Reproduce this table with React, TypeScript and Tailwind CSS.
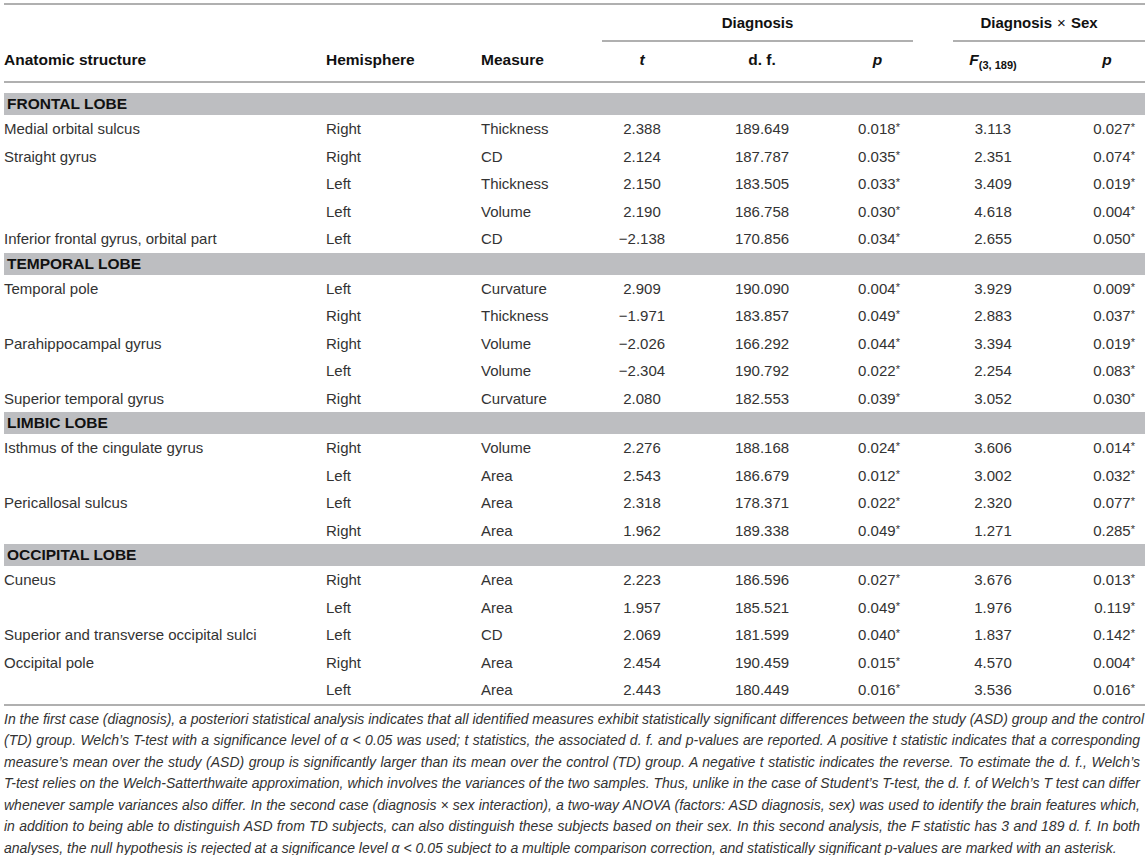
import React from "react";

type Row = [string, string, string, string, string, string, string, string];
type Section = { title: string; rows: Row[] };

const sections: Section[] = [
  {
    title: "FRONTAL LOBE",
    rows: [
      ["Medial orbital sulcus", "Right", "Thickness", "2.388", "189.649", "0.018", "3.113", "0.027"],
      ["Straight gyrus", "Right", "CD", "2.124", "187.787", "0.035", "2.351", "0.074"],
      ["", "Left", "Thickness", "2.150", "183.505", "0.033", "3.409", "0.019"],
      ["", "Left", "Volume", "2.190", "186.758", "0.030", "4.618", "0.004"],
      ["Inferior frontal gyrus, orbital part", "Left", "CD", "\u22122.138", "170.856", "0.034", "2.655", "0.050"],
    ],
  },
  {
    title: "TEMPORAL LOBE",
    rows: [
      ["Temporal pole", "Left", "Curvature", "2.909", "190.090", "0.004", "3.929", "0.009"],
      ["", "Right", "Thickness", "\u22121.971", "183.857", "0.049", "2.883", "0.037"],
      ["Parahippocampal gyrus", "Right", "Volume", "\u22122.026", "166.292", "0.044", "3.394", "0.019"],
      ["", "Left", "Volume", "\u22122.304", "190.792", "0.022", "2.254", "0.083"],
      ["Superior temporal gyrus", "Right", "Curvature", "2.080", "182.553", "0.039", "3.052", "0.030"],
    ],
  },
  {
    title: "LIMBIC LOBE",
    rows: [
      ["Isthmus of the cingulate gyrus", "Right", "Volume", "2.276", "188.168", "0.024", "3.606", "0.014"],
      ["", "Left", "Area", "2.543", "186.679", "0.012", "3.002", "0.032"],
      ["Pericallosal sulcus", "Left", "Area", "2.318", "178.371", "0.022", "2.320", "0.077"],
      ["", "Right", "Area", "1.962", "189.338", "0.049", "1.271", "0.285"],
    ],
  },
  {
    title: "OCCIPITAL LOBE",
    rows: [
      ["Cuneus", "Right", "Area", "2.223", "186.596", "0.027", "3.676", "0.013"],
      ["", "Left", "Area", "1.957", "185.521", "0.049", "1.976", "0.119"],
      ["Superior and transverse occipital sulci", "Left", "CD", "2.069", "181.599", "0.040", "1.837", "0.142"],
      ["Occipital pole", "Right", "Area", "2.454", "190.459", "0.015", "4.570", "0.004"],
      ["", "Left", "Area", "2.443", "180.449", "0.016", "3.536", "0.016"],
    ],
  },
];

const footLines = [
  "In the first case (diagnosis), a posteriori statistical analysis indicates that all identified measures exhibit statistically significant differences between the study (ASD) group and the control",
  "(TD) group. Welch\u2019s T-test with a significance level of \u03b1 < 0.05 was used; t statistics, the associated d. f. and p-values are reported. A positive t statistic indicates that a corresponding",
  "measure\u2019s mean over the study (ASD) group is significantly larger than its mean over the control (TD) group. A negative t statistic indicates the reverse. To estimate the d. f., Welch\u2019s",
  "T-test relies on the Welch-Satterthwaite approximation, which involves the variances of the two samples. Thus, unlike in the case of Student\u2019s T-test, the d. f. of Welch\u2019s T test can differ",
  "whenever sample variances also differ. In the second case (diagnosis \u00d7 sex interaction), a two-way ANOVA (factors: ASD diagnosis, sex) was used to identify the brain features which,",
  "in addition to being able to distinguish ASD from TD subjects, can also distinguish these subjects based on their sex. In this second analysis, the F statistic has 3 and 189 d. f. In both",
  "analyses, the null hypothesis is rejected at a significance level \u03b1 < 0.05 subject to a multiple comparison correction, and statistically significant p-values are marked with an asterisk.",
];

const grid = "grid grid-cols-[322px_155px_121px_80px_160px_71px_156px_76px]";

function Star() {
  return <span className="text-[11px] relative top-[-3px]">*</span>;
}

export default function App() {
  return (
    <div className="w-[1145px] h-[855px] overflow-hidden bg-white pl-[4px] font-['Liberation_Sans',Arial,sans-serif] text-[#333]">
      {/* Header */}
      <div className="mt-[3px] border-t-2 border-[#b0b0b0]">
        <div className={`${grid} h-[37px] items-end text-[15px] font-bold text-[#111]`}>
          <div className="col-start-4 col-span-3 border-b-2 border-[#b0b0b0] h-full flex items-center justify-center pt-[1px]">
            Diagnosis
          </div>
          <div className="col-start-7 col-span-2 ml-[40px] pr-[20px] border-b-2 border-[#b0b0b0] h-full flex items-center justify-center pt-[1px]">
            Diagnosis <span className="font-normal mx-[5px]">×</span> Sex
          </div>
        </div>
        <div className={`${grid} h-[41px] items-center pb-[3px] border-b-2 border-[#b0b0b0] text-[15.5px] font-bold text-[#111]`}>
          <div>Anatomic structure</div>
          <div>Hemisphere</div>
          <div>Measure</div>
          <div className="text-center italic">t</div>
          <div className="text-center">d. f.</div>
          <div className="text-center italic">p</div>
          <div className="text-center pl-[4px]">
            <span className="italic">F</span>
            <span className="text-[11px] relative top-[4px]">(3, 189)</span>
          </div>
          <div className="text-center italic">p</div>
        </div>
      </div>

      {/* Body */}
      <div className="pt-[10px] border-b-2 border-[#b0b0b0]">
        {sections.map((s) => (
          <div key={s.title}>
            <div className="h-[22px] bg-[#bdbec1] flex items-center pl-[3px] text-[15.5px] font-bold text-[#111]">
              {s.title}
            </div>
            {s.rows.map((r, i) => (
              <div key={i} className={`${grid} h-[27.5px] items-center pt-[1px] text-[15px]`}>
                <div className="whitespace-nowrap">{r[0]}</div>
                <div>{r[1]}</div>
                <div>{r[2]}</div>
                <div className="text-center">{r[3]}</div>
                <div className="text-center">{r[4]}</div>
                <div className="text-center pl-[3px]">
                  {r[5]}
                  <Star />
                </div>
                <div className="text-center pl-[4px]">{r[6]}</div>
                <div className="text-right pr-[10px]">
                  {r[7]}
                  <Star />
                </div>
              </div>
            ))}
          </div>
        ))}
      </div>

      {/* Footnote */}
      <div className="pt-[3px] pr-[5px] text-[14px] leading-[21.5px] italic text-[#333]">
        {footLines.map((l, i) => (
          <div
            key={i}
            className={i < footLines.length - 1 ? "text-justify [text-align-last:justify] whitespace-nowrap" : "whitespace-nowrap"}
          >
            {l}
          </div>
        ))}
      </div>
    </div>
  );
}
